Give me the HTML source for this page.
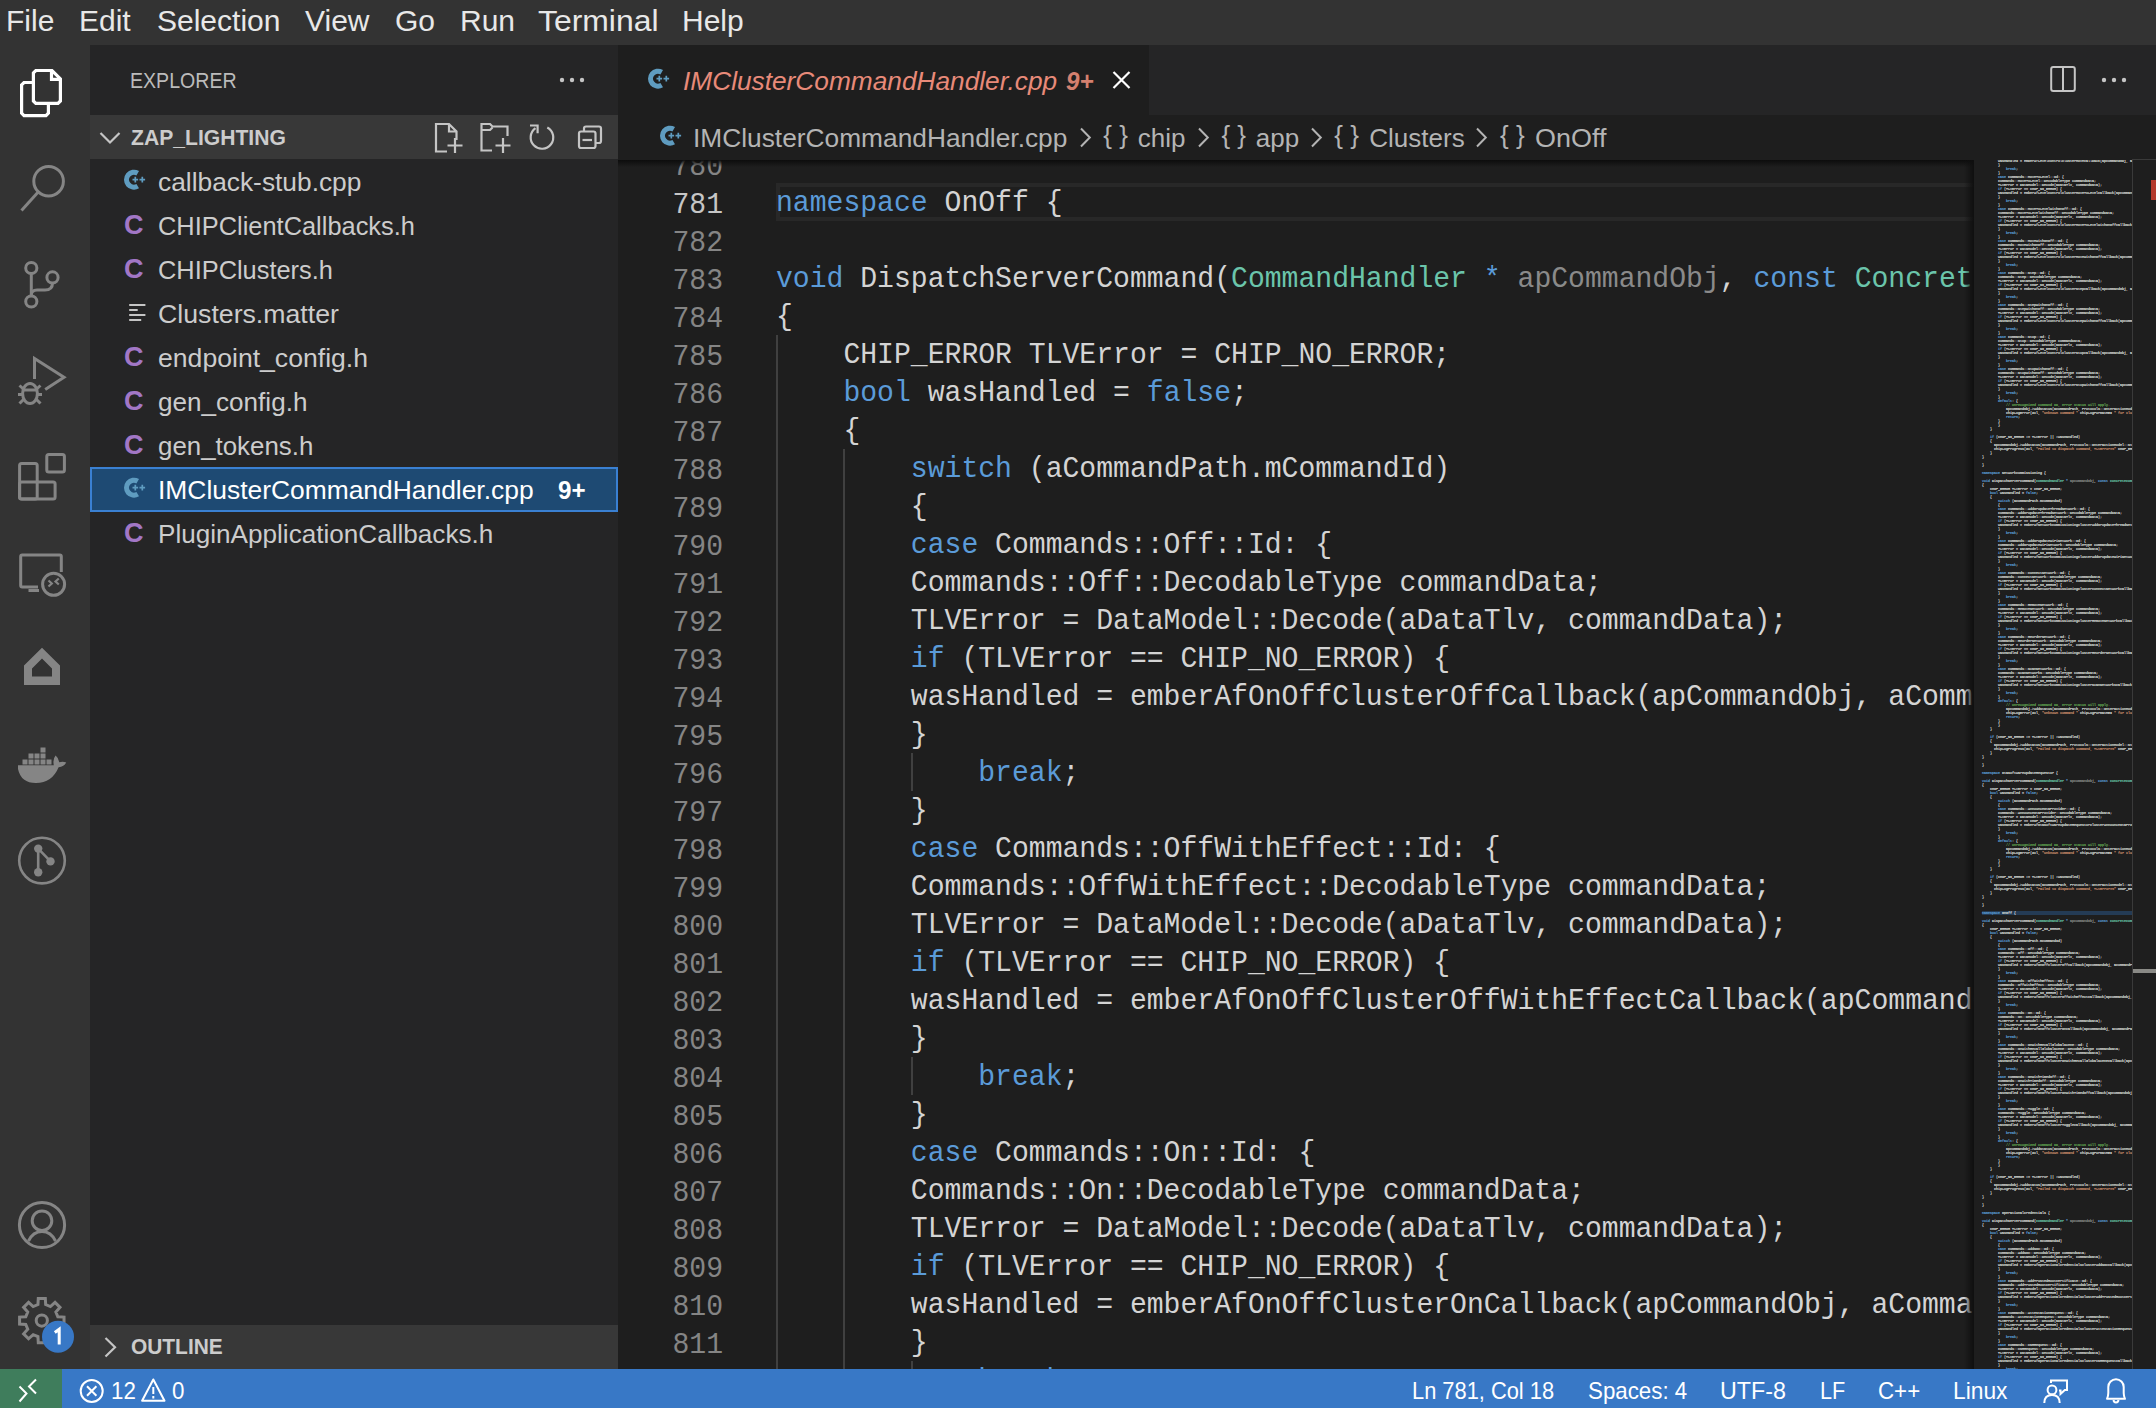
<!DOCTYPE html><html><head><meta charset="utf-8"><style>
*{box-sizing:border-box}
html,body{margin:0;padding:0}
body{width:2156px;height:1408px;overflow:hidden;position:relative;background:#1e1e1e;font-family:"Liberation Sans",sans-serif}
.abs{position:absolute}
#menubar{left:0;top:0;width:2156px;height:45px;background:#333333}
.menu{position:absolute;top:0;height:45px;line-height:43px;font-size:29px;color:#e6e6e6;white-space:pre}
#activity{left:0;top:45px;width:90px;height:1324px;background:#333333}
#sidebar{left:90px;top:45px;width:528px;height:1324px;background:#252526}
#editor{left:618px;top:45px;width:1538px;height:1324px;background:#1e1e1e;overflow:hidden}
#tabbar{left:0;top:0;width:1538px;height:70px;background:#252526}
#tab{left:0;top:0;width:531px;height:70px;background:#1e1e1e}
#status{left:0;top:1369px;width:2156px;height:39px;background:#3878c6}
.st{position:absolute;top:0;height:39px;line-height:41px;font-size:24px;color:#ffffff;white-space:pre}
.side{position:absolute;font-size:26px;color:#cccccc;white-space:pre;line-height:44px;height:44px}
.code{position:absolute;font-family:"Liberation Mono",monospace;white-space:pre;color:#d4d4d4}
.k{color:#5b9bd8}.t{color:#6bc5ab}.f{color:#8a8a8a}.c{color:#62a552}.s{color:#d08d6d}
</style></head><body>
<div id="menubar" class="abs"></div>
<div class="abs" style="left:6px;top:5.80px;font-size:30px;line-height:30px;color:#e8e8e8;font-weight:400;font-style:normal;white-space:pre;">File</div>
<div class="abs" style="left:79px;top:5.80px;font-size:30px;line-height:30px;color:#e8e8e8;font-weight:400;font-style:normal;white-space:pre;">Edit</div>
<div class="abs" style="left:157px;top:5.80px;font-size:30px;line-height:30px;color:#e8e8e8;font-weight:400;font-style:normal;white-space:pre;">Selection</div>
<div class="abs" style="left:305px;top:5.80px;font-size:30px;line-height:30px;color:#e8e8e8;font-weight:400;font-style:normal;white-space:pre;">View</div>
<div class="abs" style="left:395px;top:5.80px;font-size:30px;line-height:30px;color:#e8e8e8;font-weight:400;font-style:normal;white-space:pre;">Go</div>
<div class="abs" style="left:460px;top:5.80px;font-size:30px;line-height:30px;color:#e8e8e8;font-weight:400;font-style:normal;white-space:pre;">Run</div>
<div class="abs" style="left:538px;top:5.80px;font-size:30px;line-height:30px;color:#e8e8e8;font-weight:400;font-style:normal;white-space:pre;transform:scaleX(1.063);transform-origin:0 0;">Terminal</div>
<div class="abs" style="left:682px;top:5.80px;font-size:30px;line-height:30px;color:#e8e8e8;font-weight:400;font-style:normal;white-space:pre;">Help</div>
<div id="activity" class="abs"></div>

<svg class="abs" style="left:0;top:0" width="90" height="1408" viewBox="0 0 90 1408">
<g fill="none" stroke="#ffffff" stroke-width="3.2" stroke-linejoin="miter">
 <path d="M 33.5 82.5 H 24 L 21.6 84.9 V 113.2 L 24 115.6 H 46 L 48.4 113.2 V 104.5"/>
 <path d="M 35.8 70.5 H 52 L 60.4 78.9 V 101 L 58 103.4 H 35.8 L 33.4 101 V 72.9 Z"/>
 <path d="M 51.5 71 V 79.4 H 60"/>
</g>
<g fill="none" stroke="#858585" stroke-width="3">
 <circle cx="48.6" cy="181.2" r="14.8"/>
 <path d="M 38.2 192 L 21.5 210.5"/>
 <circle cx="31.3" cy="268" r="5.6"/>
 <circle cx="52.5" cy="277.4" r="5.6"/>
 <circle cx="31.3" cy="301.5" r="5.6"/>
 <path d="M 31.3 273.6 V 295.9"/>
 <path d="M 52.5 283 Q 52.5 290 45 290 H 37 Q 31.3 290 31.3 295"/>
 <path d="M 34.5 379 V 358.5 L 64 377.3 L 45.2 389.5" stroke-linejoin="miter"/>
 <ellipse cx="30" cy="393.5" rx="7.4" ry="10"/>
 <path d="M 22.6 390 H 37.4"/>
 <path d="M 19.5 385.5 L 24 389.5 M 40.5 385.5 L 36 389.5 M 18 394.5 H 22.5 M 42 394.5 H 37.5 M 19.5 403.5 L 24 399 M 40.5 403.5 L 36 399"/>
 <rect x="46.8" y="454.5" width="17.6" height="17.6" rx="2"/>
 <rect x="19.6" y="463.5" width="17.6" height="35.4" rx="2"/>
 <rect x="19.6" y="482" width="35.5" height="16.9" rx="2"/>
 <path d="M 38 587 H 22.2 Q 20.7 587 20.7 585.5 V 556.4 Q 20.7 554.9 22.2 554.9 H 59.8 Q 61.3 554.9 61.3 556.4 V 572"/>
 <path d="M 28.5 590.5 H 39"/>
 <circle cx="53.6" cy="584.3" r="11"/>
 <path d="M 48.5 580.5 L 51.8 583.5 L 48.5 586.5 M 58.8 578.5 L 55.5 581.5 L 58.8 584.5" stroke-width="2.2"/>
 <circle cx="42" cy="860.6" r="22.8" stroke-width="2.6"/>
 <path d="M 38.2 848.6 V 872.3 M 38.2 848.6 L 50.5 861.4" stroke-width="2.6"/>
 <circle cx="42" cy="1225" r="22.6"/>
 <circle cx="42" cy="1220.7" r="9.8"/>
 <path d="M 28.5 1241 Q 33 1231.5 42 1231.5 Q 51 1231.5 55.5 1241"/>
 <path d="M 37.95 1304.56 L 38.28 1298.38 L 45.32 1298.38 L 45.65 1304.56 L 50.42 1306.53 L 55.03 1302.40 L 60.00 1307.37 L 55.87 1311.98 L 57.84 1316.75 L 64.02 1317.08 L 64.02 1324.12 L 57.84 1324.45 L 55.87 1329.22 L 60.00 1333.83 L 55.03 1338.80 L 50.42 1334.67 L 45.65 1336.64 L 45.32 1342.82 L 38.28 1342.82 L 37.95 1336.64 L 33.18 1334.67 L 28.57 1338.80 L 23.60 1333.83 L 27.73 1329.22 L 25.76 1324.45 L 19.58 1324.12 L 19.58 1317.08 L 25.76 1316.75 L 27.73 1311.98 L 23.60 1307.37 L 28.57 1302.40 L 33.18 1306.53 Z"/>
 <circle cx="41.8" cy="1320.6" r="5.6"/>
</g>
<g fill="#858585">
 <path fill-rule="evenodd" d="M 42 647.8 L 60 665.5 V 685 H 24 V 665.5 Z M 42 658.5 L 32 668.5 V 676.5 H 52 V 668.5 Z"/>
 <circle cx="38.2" cy="848.6" r="4.2"/><circle cx="50.5" cy="861.4" r="4.2"/><circle cx="38.2" cy="872.3" r="4.2"/>
 <path d="M 18 765.3 H 53.8 Q 52.5 759 55.6 755.5 Q 58.8 758 59.3 762.3 Q 63 761 66.2 762.6 Q 64 767 58.6 767.2 Q 52 783 36 783 Q 21 783 18 769 Z"/>
 <rect x="22.5" y="759.5" width="5" height="5"/><rect x="28.5" y="759.5" width="5" height="5"/><rect x="34.5" y="759.5" width="5" height="5"/><rect x="40.5" y="759.5" width="5" height="5"/><rect x="46.5" y="759.5" width="5" height="5"/>
 <rect x="28.5" y="753.5" width="5" height="5"/><rect x="34.5" y="753.5" width="5" height="5"/><rect x="40.5" y="753.5" width="5" height="5"/>
 <rect x="40.5" y="747.5" width="5" height="5"/>
</g>
<circle cx="58" cy="1336.8" r="16" fill="#3878c6"/>
<path d="M 54.8 1332.5 L 59.2 1329.3 V 1344.6" fill="none" stroke="#ffffff" stroke-width="3"/>
</svg>

<div id="sidebar" class="abs"></div>
<div class="abs" style="left:130px;top:70.15px;font-size:22.5px;line-height:22.5px;color:#bbbbbb;font-weight:400;font-style:normal;white-space:pre;transform:scaleX(0.87);transform-origin:0 0;">EXPLORER</div>
<svg class="abs" style="left:550px;top:70px" width="40" height="20"><g fill="#c5c5c5"><circle cx="12" cy="10" r="2.2"/><circle cx="22" cy="10" r="2.2"/><circle cx="32" cy="10" r="2.2"/></g></svg>
<div class="abs" style="left:90px;top:115px;width:528px;height:44px;background:#383838"></div>
<svg class="abs" style="left:90px;top:115px" width="528" height="44" viewBox="90 115 528 44"><g fill="none" stroke="#c5c5c5" stroke-width="2.2"><path d="M 100.5 133 L 110 142.5 L 119.5 133"/><path d="M 447 151.5 H 436 V 124 H 449 L 456.5 131.5 V 140 M 449 124 V 131.5 H 456.5" stroke-linejoin="miter"/><path d="M 455 138 V 153 M 447.5 145.5 H 462.5"/><path d="M 492 150.5 H 481.5 V 124 H 490 L 492.5 126.5 H 507.5 V 136 M 481.5 130 H 490 L 492.5 127.5" stroke-linejoin="miter"/><path d="M 503 138 V 153 M 495.5 145.5 H 510.5"/><path d="M 535.5 128.2 A 11.3 11.3 0 1 0 547.3 127.5"/><path d="M 530 125.5 H 537.6 V 133.2"/><rect x="579" y="131.5" width="16.5" height="16.5" rx="2"/><path d="M 584 131.5 V 128.5 Q 584 126.5 586 126.5 H 599 Q 601 126.5 601 128.5 V 141 Q 601 143 599 143 H 595.5"/><path d="M 582.5 140 H 592"/></g></svg>
<div class="abs" style="left:130.5px;top:126.68px;font-size:22px;line-height:22px;color:#cccccc;font-weight:700;font-style:normal;white-space:pre;transform:scaleX(0.96);transform-origin:0 0;">ZAP_LIGHTING</div>
<div class="abs" style="left:158px;top:169.39px;font-size:26px;line-height:26px;color:#cccccc;font-weight:400;font-style:normal;white-space:pre;transform:scaleX(1.0126);transform-origin:0 0;">callback-stub.cpp</div>
<svg class="abs" style="left:120px;top:166px" width="32" height="32" viewBox="0 0 32 32"><path d="M 17.73 7.25 A 7.45 7.45 0 1 0 17.73 20.15" fill="none" stroke="#5f9cc0" stroke-width="5.1"/><path d="M 12.5 13.6 H 18.1 M 15.3 10.8 V 16.4 M 19.5 13.6 H 25.1 M 22.3 10.8 V 16.4" stroke="#5f9cc0" stroke-width="1.7"/></svg>
<div class="abs" style="left:158px;top:213.39px;font-size:26px;line-height:26px;color:#cccccc;font-weight:400;font-style:normal;white-space:pre;transform:scaleX(0.977);transform-origin:0 0;">CHIPClientCallbacks.h</div>
<div class="abs" style="left:124px;top:211.64px;font-size:27px;line-height:27px;color:#a277c6;font-weight:700;font-style:normal;white-space:pre;">C</div>
<div class="abs" style="left:158px;top:257.39px;font-size:26px;line-height:26px;color:#cccccc;font-weight:400;font-style:normal;white-space:pre;transform:scaleX(0.9763);transform-origin:0 0;">CHIPClusters.h</div>
<div class="abs" style="left:124px;top:255.64px;font-size:27px;line-height:27px;color:#a277c6;font-weight:700;font-style:normal;white-space:pre;">C</div>
<div class="abs" style="left:158px;top:301.39px;font-size:26px;line-height:26px;color:#cccccc;font-weight:400;font-style:normal;white-space:pre;transform:scaleX(1.0263);transform-origin:0 0;">Clusters.matter</div>
<svg class="abs" style="left:120px;top:292px" width="32" height="44" viewBox="0 0 32 44"><g fill="#c5c5c5"><rect x="9.2" y="12" width="16.2" height="2"/><rect x="9.2" y="17" width="8.5" height="2"/><rect x="9.2" y="22" width="16.2" height="2"/><rect x="9.2" y="27" width="12" height="2"/></g></svg>
<div class="abs" style="left:158px;top:345.39px;font-size:26px;line-height:26px;color:#cccccc;font-weight:400;font-style:normal;white-space:pre;transform:scaleX(1.0232);transform-origin:0 0;">endpoint_config.h</div>
<div class="abs" style="left:124px;top:343.64px;font-size:27px;line-height:27px;color:#a277c6;font-weight:700;font-style:normal;white-space:pre;">C</div>
<div class="abs" style="left:158px;top:389.39px;font-size:26px;line-height:26px;color:#cccccc;font-weight:400;font-style:normal;white-space:pre;transform:scaleX(1.0034);transform-origin:0 0;">gen_config.h</div>
<div class="abs" style="left:124px;top:387.64px;font-size:27px;line-height:27px;color:#a277c6;font-weight:700;font-style:normal;white-space:pre;">C</div>
<div class="abs" style="left:158px;top:433.39px;font-size:26px;line-height:26px;color:#cccccc;font-weight:400;font-style:normal;white-space:pre;transform:scaleX(0.9948);transform-origin:0 0;">gen_tokens.h</div>
<div class="abs" style="left:124px;top:431.64px;font-size:27px;line-height:27px;color:#a277c6;font-weight:700;font-style:normal;white-space:pre;">C</div>
<div class="abs" style="left:90px;top:466.5px;width:528px;height:45px;background:#1e4a73;border:2px solid #3a80d2"></div>
<div class="abs" style="left:158px;top:477.39px;font-size:26px;line-height:26px;color:#ffffff;font-weight:400;font-style:normal;white-space:pre;transform:scaleX(1.0153);transform-origin:0 0;">IMClusterCommandHandler.cpp</div>
<svg class="abs" style="left:120px;top:474px" width="32" height="32" viewBox="0 0 32 32"><path d="M 17.73 7.25 A 7.45 7.45 0 1 0 17.73 20.15" fill="none" stroke="#5f9cc0" stroke-width="5.1"/><path d="M 12.5 13.6 H 18.1 M 15.3 10.8 V 16.4 M 19.5 13.6 H 25.1 M 22.3 10.8 V 16.4" stroke="#5f9cc0" stroke-width="1.7"/></svg>
<div class="abs" style="left:158px;top:521.39px;font-size:26px;line-height:26px;color:#cccccc;font-weight:400;font-style:normal;white-space:pre;transform:scaleX(1.0042);transform-origin:0 0;">PluginApplicationCallbacks.h</div>
<div class="abs" style="left:124px;top:519.64px;font-size:27px;line-height:27px;color:#a277c6;font-weight:700;font-style:normal;white-space:pre;">C</div>
<div class="abs" style="left:558px;top:477.39px;font-size:26px;line-height:26px;color:#ffffff;font-weight:700;font-style:normal;white-space:pre;transform:scaleX(0.93);transform-origin:0 0;">9+</div>
<div class="abs" style="left:90px;top:1325px;width:528px;height:44px;background:#383838"></div>
<svg class="abs" style="left:90px;top:1325px" width="40" height="44" viewBox="90 1325 40 44"><path d="M 105.5 1338 L 115 1347.3 L 105.5 1356.5" fill="none" stroke="#c5c5c5" stroke-width="2.2"/></svg>
<div class="abs" style="left:130.5px;top:1336.08px;font-size:22px;line-height:22px;color:#cccccc;font-weight:700;font-style:normal;white-space:pre;transform:scaleX(0.95);transform-origin:0 0;">OUTLINE</div>
<div class="abs" style="left:618px;top:45px;width:1538px;height:70px;background:#252526"></div>
<div class="abs" style="left:618px;top:45px;width:531px;height:70px;background:#1e1e1e"></div>
<svg class="abs" style="left:644px;top:65px" width="32" height="32" viewBox="0 0 32 32"><path d="M 17.73 7.25 A 7.45 7.45 0 1 0 17.73 20.15" fill="none" stroke="#5f9cc0" stroke-width="5.1"/><path d="M 12.5 13.6 H 18.1 M 15.3 10.8 V 16.4 M 19.5 13.6 H 25.1 M 22.3 10.8 V 16.4" stroke="#5f9cc0" stroke-width="1.7"/></svg>
<div class="abs" style="left:683px;top:68.39px;font-size:26px;line-height:26px;color:#e88a79;font-weight:400;font-style:italic;white-space:pre;transform:scaleX(1.01);transform-origin:0 0;">IMClusterCommandHandler.cpp</div>
<div class="abs" style="left:1066px;top:68.39px;font-size:26px;line-height:26px;color:#d4806f;font-weight:700;font-style:italic;white-space:pre;transform:scaleX(0.93);transform-origin:0 0;">9+</div>
<svg class="abs" style="left:1108px;top:66px" width="28" height="28" viewBox="0 0 28 28"><path d="M 5.5 6 L 21.5 22 M 21.5 6 L 5.5 22" stroke="#ffffff" stroke-width="2.2"/></svg>
<svg class="abs" style="left:2040px;top:56px" width="100" height="50" viewBox="2040 56 100 50"><rect x="2051.2" y="67" width="23.6" height="24" rx="2" fill="none" stroke="#c5c5c5" stroke-width="2"/><path d="M 2063 67 V 91" stroke="#c5c5c5" stroke-width="2"/><g fill="#c5c5c5"><circle cx="2104" cy="80" r="2.2"/><circle cx="2114" cy="80" r="2.2"/><circle cx="2124" cy="80" r="2.2"/></g></svg>
<svg class="abs" style="left:656px;top:122px" width="32" height="32" viewBox="0 0 32 32"><path d="M 17.73 7.25 A 7.45 7.45 0 1 0 17.73 20.15" fill="none" stroke="#5f9cc0" stroke-width="5.1"/><path d="M 12.5 13.6 H 18.1 M 15.3 10.8 V 16.4 M 19.5 13.6 H 25.1 M 22.3 10.8 V 16.4" stroke="#5f9cc0" stroke-width="1.7"/></svg>
<div class="abs" style="left:692.5px;top:124.99px;font-size:26px;line-height:26px;color:#b4b4b4;font-weight:400;font-style:normal;white-space:pre;transform:scaleX(1.012);transform-origin:0 0;">IMClusterCommandHandler.cpp</div>
<svg class="abs" style="left:1075.5px;top:124px" width="20" height="30" viewBox="0 0 20 30"><path d="M 5 4.5 L 13.8 13.5 L 5 22.5" fill="none" stroke="#b4b4b4" stroke-width="2"/></svg>
<svg class="abs" style="left:1194px;top:124px" width="20" height="30" viewBox="0 0 20 30"><path d="M 5 4.5 L 13.8 13.5 L 5 22.5" fill="none" stroke="#b4b4b4" stroke-width="2"/></svg>
<svg class="abs" style="left:1306.7px;top:124px" width="20" height="30" viewBox="0 0 20 30"><path d="M 5 4.5 L 13.8 13.5 L 5 22.5" fill="none" stroke="#b4b4b4" stroke-width="2"/></svg>
<svg class="abs" style="left:1472.3px;top:124px" width="20" height="30" viewBox="0 0 20 30"><path d="M 5 4.5 L 13.8 13.5 L 5 22.5" fill="none" stroke="#b4b4b4" stroke-width="2"/></svg>
<div class="abs" style="left:1103.3000000000002px;top:121.99px;font-size:26px;line-height:26px;color:#b4b4b4;font-weight:400;font-style:normal;white-space:pre;">{ }</div>
<div class="abs" style="left:1137.8px;top:124.99px;font-size:26px;line-height:26px;color:#b4b4b4;font-weight:400;font-style:normal;white-space:pre;">chip</div>
<div class="abs" style="left:1221.4px;top:121.99px;font-size:26px;line-height:26px;color:#b4b4b4;font-weight:400;font-style:normal;white-space:pre;">{ }</div>
<div class="abs" style="left:1255.8px;top:124.99px;font-size:26px;line-height:26px;color:#b4b4b4;font-weight:400;font-style:normal;white-space:pre;">app</div>
<div class="abs" style="left:1334.3000000000002px;top:121.99px;font-size:26px;line-height:26px;color:#b4b4b4;font-weight:400;font-style:normal;white-space:pre;">{ }</div>
<div class="abs" style="left:1369.3px;top:124.99px;font-size:26px;line-height:26px;color:#b4b4b4;font-weight:400;font-style:normal;white-space:pre;">Clusters</div>
<div class="abs" style="left:1500.0px;top:121.99px;font-size:26px;line-height:26px;color:#b4b4b4;font-weight:400;font-style:normal;white-space:pre;">{ }</div>
<div class="abs" style="left:1534.7px;top:124.99px;font-size:26px;line-height:26px;color:#b4b4b4;font-weight:400;font-style:normal;white-space:pre;transform:scaleX(1.036);transform-origin:0 0;">OnOff</div>
<div class="abs" style="left:618px;top:160px;width:1356px;height:1209px;overflow:hidden;background:#1e1e1e">
<div class="abs" style="left:158px;top:23px;width:1210px;height:38px;border:4px solid #282828"></div>
<div class="abs" style="left:158.0px;top:175px;width:2px;height:1178px;background:#404040"></div>
<div class="abs" style="left:225.4px;top:289px;width:2px;height:1064px;background:#404040"></div>
<div class="abs" style="left:292.8px;top:593px;width:2px;height:38px;background:#404040"></div>
<div class="abs" style="left:292.8px;top:897px;width:2px;height:38px;background:#404040"></div>
<div class="abs" style="left:292.8px;top:1201px;width:2px;height:38px;background:#404040"></div>
<div class="code" style="left:1px;top:-12px;width:104px;text-align:right;font-size:30px;line-height:38px;color:#858585;transform:scaleX(0.93611);transform-origin:100% 0">780</div>
<div class="code" style="left:158px;top:-14px;font-size:30px;line-height:38px;transform:scaleX(0.93611);transform-origin:0 0"></div>
<div class="code" style="left:1px;top:26px;width:104px;text-align:right;font-size:30px;line-height:38px;color:#c6c6c6;transform:scaleX(0.93611);transform-origin:100% 0">781</div>
<div class="code" style="left:158px;top:24px;font-size:30px;line-height:38px;transform:scaleX(0.93611);transform-origin:0 0"><span class="k">namespace </span>OnOff {</div>
<div class="code" style="left:1px;top:64px;width:104px;text-align:right;font-size:30px;line-height:38px;color:#858585;transform:scaleX(0.93611);transform-origin:100% 0">782</div>
<div class="code" style="left:158px;top:62px;font-size:30px;line-height:38px;transform:scaleX(0.93611);transform-origin:0 0"></div>
<div class="code" style="left:1px;top:102px;width:104px;text-align:right;font-size:30px;line-height:38px;color:#858585;transform:scaleX(0.93611);transform-origin:100% 0">783</div>
<div class="code" style="left:158px;top:100px;font-size:30px;line-height:38px;transform:scaleX(0.93611);transform-origin:0 0"><span class="k">void </span>DispatchServerCommand(<span class="t">CommandHandler </span><span class="k">* </span><span class="f">apCommandObj</span>, <span class="k">const </span><span class="t">ConcreteCommandPath </span>&amp; aCommandPath, TLV::TLVReader &amp; aDataTlv)</div>
<div class="code" style="left:1px;top:140px;width:104px;text-align:right;font-size:30px;line-height:38px;color:#858585;transform:scaleX(0.93611);transform-origin:100% 0">784</div>
<div class="code" style="left:158px;top:138px;font-size:30px;line-height:38px;transform:scaleX(0.93611);transform-origin:0 0">{</div>
<div class="code" style="left:1px;top:178px;width:104px;text-align:right;font-size:30px;line-height:38px;color:#858585;transform:scaleX(0.93611);transform-origin:100% 0">785</div>
<div class="code" style="left:158px;top:176px;font-size:30px;line-height:38px;transform:scaleX(0.93611);transform-origin:0 0">    CHIP_ERROR TLVError = CHIP_NO_ERROR;</div>
<div class="code" style="left:1px;top:216px;width:104px;text-align:right;font-size:30px;line-height:38px;color:#858585;transform:scaleX(0.93611);transform-origin:100% 0">786</div>
<div class="code" style="left:158px;top:214px;font-size:30px;line-height:38px;transform:scaleX(0.93611);transform-origin:0 0">    <span class="k">bool </span>wasHandled = <span class="k">false</span>;</div>
<div class="code" style="left:1px;top:254px;width:104px;text-align:right;font-size:30px;line-height:38px;color:#858585;transform:scaleX(0.93611);transform-origin:100% 0">787</div>
<div class="code" style="left:158px;top:252px;font-size:30px;line-height:38px;transform:scaleX(0.93611);transform-origin:0 0">    {</div>
<div class="code" style="left:1px;top:292px;width:104px;text-align:right;font-size:30px;line-height:38px;color:#858585;transform:scaleX(0.93611);transform-origin:100% 0">788</div>
<div class="code" style="left:158px;top:290px;font-size:30px;line-height:38px;transform:scaleX(0.93611);transform-origin:0 0">        <span class="k">switch </span>(aCommandPath.mCommandId)</div>
<div class="code" style="left:1px;top:330px;width:104px;text-align:right;font-size:30px;line-height:38px;color:#858585;transform:scaleX(0.93611);transform-origin:100% 0">789</div>
<div class="code" style="left:158px;top:328px;font-size:30px;line-height:38px;transform:scaleX(0.93611);transform-origin:0 0">        {</div>
<div class="code" style="left:1px;top:368px;width:104px;text-align:right;font-size:30px;line-height:38px;color:#858585;transform:scaleX(0.93611);transform-origin:100% 0">790</div>
<div class="code" style="left:158px;top:366px;font-size:30px;line-height:38px;transform:scaleX(0.93611);transform-origin:0 0">        <span class="k">case </span>Commands::Off::Id: {</div>
<div class="code" style="left:1px;top:406px;width:104px;text-align:right;font-size:30px;line-height:38px;color:#858585;transform:scaleX(0.93611);transform-origin:100% 0">791</div>
<div class="code" style="left:158px;top:404px;font-size:30px;line-height:38px;transform:scaleX(0.93611);transform-origin:0 0">        Commands::Off::DecodableType commandData;</div>
<div class="code" style="left:1px;top:444px;width:104px;text-align:right;font-size:30px;line-height:38px;color:#858585;transform:scaleX(0.93611);transform-origin:100% 0">792</div>
<div class="code" style="left:158px;top:442px;font-size:30px;line-height:38px;transform:scaleX(0.93611);transform-origin:0 0">        TLVError = DataModel::Decode(aDataTlv, commandData);</div>
<div class="code" style="left:1px;top:482px;width:104px;text-align:right;font-size:30px;line-height:38px;color:#858585;transform:scaleX(0.93611);transform-origin:100% 0">793</div>
<div class="code" style="left:158px;top:480px;font-size:30px;line-height:38px;transform:scaleX(0.93611);transform-origin:0 0">        <span class="k">if </span>(TLVError == CHIP_NO_ERROR) {</div>
<div class="code" style="left:1px;top:520px;width:104px;text-align:right;font-size:30px;line-height:38px;color:#858585;transform:scaleX(0.93611);transform-origin:100% 0">794</div>
<div class="code" style="left:158px;top:518px;font-size:30px;line-height:38px;transform:scaleX(0.93611);transform-origin:0 0">        wasHandled = emberAfOnOffClusterOffCallback(apCommandObj, aCommandPath, commandData);</div>
<div class="code" style="left:1px;top:558px;width:104px;text-align:right;font-size:30px;line-height:38px;color:#858585;transform:scaleX(0.93611);transform-origin:100% 0">795</div>
<div class="code" style="left:158px;top:556px;font-size:30px;line-height:38px;transform:scaleX(0.93611);transform-origin:0 0">        }</div>
<div class="code" style="left:1px;top:596px;width:104px;text-align:right;font-size:30px;line-height:38px;color:#858585;transform:scaleX(0.93611);transform-origin:100% 0">796</div>
<div class="code" style="left:158px;top:594px;font-size:30px;line-height:38px;transform:scaleX(0.93611);transform-origin:0 0">            <span class="k">break</span>;</div>
<div class="code" style="left:1px;top:634px;width:104px;text-align:right;font-size:30px;line-height:38px;color:#858585;transform:scaleX(0.93611);transform-origin:100% 0">797</div>
<div class="code" style="left:158px;top:632px;font-size:30px;line-height:38px;transform:scaleX(0.93611);transform-origin:0 0">        }</div>
<div class="code" style="left:1px;top:672px;width:104px;text-align:right;font-size:30px;line-height:38px;color:#858585;transform:scaleX(0.93611);transform-origin:100% 0">798</div>
<div class="code" style="left:158px;top:670px;font-size:30px;line-height:38px;transform:scaleX(0.93611);transform-origin:0 0">        <span class="k">case </span>Commands::OffWithEffect::Id: {</div>
<div class="code" style="left:1px;top:710px;width:104px;text-align:right;font-size:30px;line-height:38px;color:#858585;transform:scaleX(0.93611);transform-origin:100% 0">799</div>
<div class="code" style="left:158px;top:708px;font-size:30px;line-height:38px;transform:scaleX(0.93611);transform-origin:0 0">        Commands::OffWithEffect::DecodableType commandData;</div>
<div class="code" style="left:1px;top:748px;width:104px;text-align:right;font-size:30px;line-height:38px;color:#858585;transform:scaleX(0.93611);transform-origin:100% 0">800</div>
<div class="code" style="left:158px;top:746px;font-size:30px;line-height:38px;transform:scaleX(0.93611);transform-origin:0 0">        TLVError = DataModel::Decode(aDataTlv, commandData);</div>
<div class="code" style="left:1px;top:786px;width:104px;text-align:right;font-size:30px;line-height:38px;color:#858585;transform:scaleX(0.93611);transform-origin:100% 0">801</div>
<div class="code" style="left:158px;top:784px;font-size:30px;line-height:38px;transform:scaleX(0.93611);transform-origin:0 0">        <span class="k">if </span>(TLVError == CHIP_NO_ERROR) {</div>
<div class="code" style="left:1px;top:824px;width:104px;text-align:right;font-size:30px;line-height:38px;color:#858585;transform:scaleX(0.93611);transform-origin:100% 0">802</div>
<div class="code" style="left:158px;top:822px;font-size:30px;line-height:38px;transform:scaleX(0.93611);transform-origin:0 0">        wasHandled = emberAfOnOffClusterOffWithEffectCallback(apCommandObj, aCommandPath, commandData);</div>
<div class="code" style="left:1px;top:862px;width:104px;text-align:right;font-size:30px;line-height:38px;color:#858585;transform:scaleX(0.93611);transform-origin:100% 0">803</div>
<div class="code" style="left:158px;top:860px;font-size:30px;line-height:38px;transform:scaleX(0.93611);transform-origin:0 0">        }</div>
<div class="code" style="left:1px;top:900px;width:104px;text-align:right;font-size:30px;line-height:38px;color:#858585;transform:scaleX(0.93611);transform-origin:100% 0">804</div>
<div class="code" style="left:158px;top:898px;font-size:30px;line-height:38px;transform:scaleX(0.93611);transform-origin:0 0">            <span class="k">break</span>;</div>
<div class="code" style="left:1px;top:938px;width:104px;text-align:right;font-size:30px;line-height:38px;color:#858585;transform:scaleX(0.93611);transform-origin:100% 0">805</div>
<div class="code" style="left:158px;top:936px;font-size:30px;line-height:38px;transform:scaleX(0.93611);transform-origin:0 0">        }</div>
<div class="code" style="left:1px;top:976px;width:104px;text-align:right;font-size:30px;line-height:38px;color:#858585;transform:scaleX(0.93611);transform-origin:100% 0">806</div>
<div class="code" style="left:158px;top:974px;font-size:30px;line-height:38px;transform:scaleX(0.93611);transform-origin:0 0">        <span class="k">case </span>Commands::On::Id: {</div>
<div class="code" style="left:1px;top:1014px;width:104px;text-align:right;font-size:30px;line-height:38px;color:#858585;transform:scaleX(0.93611);transform-origin:100% 0">807</div>
<div class="code" style="left:158px;top:1012px;font-size:30px;line-height:38px;transform:scaleX(0.93611);transform-origin:0 0">        Commands::On::DecodableType commandData;</div>
<div class="code" style="left:1px;top:1052px;width:104px;text-align:right;font-size:30px;line-height:38px;color:#858585;transform:scaleX(0.93611);transform-origin:100% 0">808</div>
<div class="code" style="left:158px;top:1050px;font-size:30px;line-height:38px;transform:scaleX(0.93611);transform-origin:0 0">        TLVError = DataModel::Decode(aDataTlv, commandData);</div>
<div class="code" style="left:1px;top:1090px;width:104px;text-align:right;font-size:30px;line-height:38px;color:#858585;transform:scaleX(0.93611);transform-origin:100% 0">809</div>
<div class="code" style="left:158px;top:1088px;font-size:30px;line-height:38px;transform:scaleX(0.93611);transform-origin:0 0">        <span class="k">if </span>(TLVError == CHIP_NO_ERROR) {</div>
<div class="code" style="left:1px;top:1128px;width:104px;text-align:right;font-size:30px;line-height:38px;color:#858585;transform:scaleX(0.93611);transform-origin:100% 0">810</div>
<div class="code" style="left:158px;top:1126px;font-size:30px;line-height:38px;transform:scaleX(0.93611);transform-origin:0 0">        wasHandled = emberAfOnOffClusterOnCallback(apCommandObj, aCommandPath, commandData);</div>
<div class="code" style="left:1px;top:1166px;width:104px;text-align:right;font-size:30px;line-height:38px;color:#858585;transform:scaleX(0.93611);transform-origin:100% 0">811</div>
<div class="code" style="left:158px;top:1164px;font-size:30px;line-height:38px;transform:scaleX(0.93611);transform-origin:0 0">        }</div>
<div class="code" style="left:1px;top:1204px;width:104px;text-align:right;font-size:30px;line-height:38px;color:#858585;transform:scaleX(0.93611);transform-origin:100% 0">812</div>
<div class="code" style="left:158px;top:1202px;font-size:30px;line-height:38px;transform:scaleX(0.93611);transform-origin:0 0">            <span class="k">break</span>;</div>
</div>
<div class="abs" style="left:618px;top:160px;width:1356px;height:7px;background:linear-gradient(#0c0c0c,rgba(30,30,30,0))"></div>
<div class="abs" style="left:1964px;top:160px;width:10px;height:1209px;background:linear-gradient(90deg,rgba(30,30,30,0),#0f0f0f)"></div>
<div class="abs" style="left:1974px;top:160px;width:159px;height:1209px;overflow:hidden;background:#1e1e1e">
<div class="abs" style="left:8px;top:751px;width:160px;height:4px;background:#243b55"></div>
<div class="abs mmtext" style="left:8px;top:0;transform:scale(0.33333);transform-origin:0 0">
<div style="font-family:'Liberation Mono';font-size:13px;line-height:12px;white-space:pre;color:#dcdcdc;font-weight:700;-webkit-text-stroke:0.3px currentColor;transform:scaleX(0.7692);transform-origin:0 0;margin-top:-3.00px">        wasHandled = emberAfLevelControlClusterMoveCallback(apCommandObj, aCommandPath, commandData);
        }
            <span class="k">break</span>;
        }
        <span class="k">case </span>Commands::MoveToLevel::Id: {
        Commands::MoveToLevel::DecodableType commandData;
        TLVError = DataModel::Decode(aDataTlv, commandData);
        <span class="k">if </span>(TLVError == CHIP_NO_ERROR) {
        wasHandled = emberAfLevelControlClusterMoveToLevelCallback(apCommandObj, aCommandPath, commandData);
        }
            <span class="k">break</span>;
        }
        <span class="k">case </span>Commands::MoveToLevelWithOnOff::Id: {
        Commands::MoveToLevelWithOnOff::DecodableType commandData;
        TLVError = DataModel::Decode(aDataTlv, commandData);
        <span class="k">if </span>(TLVError == CHIP_NO_ERROR) {
        wasHandled = emberAfLevelControlClusterMoveToLevelWithOnOffCallback(apCommandObj, aCommandPath, commandData);
        }
            <span class="k">break</span>;
        }
        <span class="k">case </span>Commands::MoveWithOnOff::Id: {
        Commands::MoveWithOnOff::DecodableType commandData;
        TLVError = DataModel::Decode(aDataTlv, commandData);
        <span class="k">if </span>(TLVError == CHIP_NO_ERROR) {
        wasHandled = emberAfLevelControlClusterMoveWithOnOffCallback(apCommandObj, aCommandPath, commandData);
        }
            <span class="k">break</span>;
        }
        <span class="k">case </span>Commands::Step::Id: {
        Commands::Step::DecodableType commandData;
        TLVError = DataModel::Decode(aDataTlv, commandData);
        <span class="k">if </span>(TLVError == CHIP_NO_ERROR) {
        wasHandled = emberAfLevelControlClusterStepCallback(apCommandObj, aCommandPath, commandData);
        }
            <span class="k">break</span>;
        }
        <span class="k">case </span>Commands::StepWithOnOff::Id: {
        Commands::StepWithOnOff::DecodableType commandData;
        TLVError = DataModel::Decode(aDataTlv, commandData);
        <span class="k">if </span>(TLVError == CHIP_NO_ERROR) {
        wasHandled = emberAfLevelControlClusterStepWithOnOffCallback(apCommandObj, aCommandPath, commandData);
        }
            <span class="k">break</span>;
        }
        <span class="k">case </span>Commands::Stop::Id: {
        Commands::Stop::DecodableType commandData;
        TLVError = DataModel::Decode(aDataTlv, commandData);
        <span class="k">if </span>(TLVError == CHIP_NO_ERROR) {
        wasHandled = emberAfLevelControlClusterStopCallback(apCommandObj, aCommandPath, commandData);
        }
            <span class="k">break</span>;
        }
        <span class="k">case </span>Commands::StopWithOnOff::Id: {
        Commands::StopWithOnOff::DecodableType commandData;
        TLVError = DataModel::Decode(aDataTlv, commandData);
        <span class="k">if </span>(TLVError == CHIP_NO_ERROR) {
        wasHandled = emberAfLevelControlClusterStopWithOnOffCallback(apCommandObj, aCommandPath, commandData);
        }
            <span class="k">break</span>;
        }
        <span class="k">default</span>: {
            <span class="c">// Unrecognized command ID, error status will apply.</span>
            apCommandObj-&gt;AddStatus(aCommandPath, Protocols::InteractionModel::Status::UnsupportedCommand);
            ChipLogError(Zcl, <span class="s">&quot;Unknown command &quot; </span>ChipLogFormatMEI <span class="s">&quot; for cluster &quot; </span>ChipLogFormatMEI, ChipLogValueMEI(aCommandPath.mCommandId));
            <span class="k">return</span>;
        }
        }
    }

    <span class="k">if </span>(CHIP_NO_ERROR != TLVError || !wasHandled)
    {
      apCommandObj-&gt;AddStatus(aCommandPath, Protocols::InteractionModel::Status::InvalidCommand);
      ChipLogProgress(Zcl, <span class="s">&quot;Failed to dispatch command, TLVError=%&quot; </span>CHIP_ERROR_FORMAT, TLVError.Format());
    }
}

}

<span class="k">namespace </span>NetworkCommissioning {

<span class="k">void </span>DispatchServerCommand(<span class="t">CommandHandler </span><span class="k">* </span><span class="f">apCommandObj</span>, <span class="k">const </span><span class="t">ConcreteCommandPath </span>&amp; aCommandPath, TLV::TLVReader &amp; aDataTlv)
{
    CHIP_ERROR TLVError = CHIP_NO_ERROR;
    <span class="k">bool </span>wasHandled = <span class="k">false</span>;
    {
        <span class="k">switch </span>(aCommandPath.mCommandId)
        {
        <span class="k">case </span>Commands::AddOrUpdateThreadNetwork::Id: {
        Commands::AddOrUpdateThreadNetwork::DecodableType commandData;
        TLVError = DataModel::Decode(aDataTlv, commandData);
        <span class="k">if </span>(TLVError == CHIP_NO_ERROR) {
        wasHandled = emberAfNetworkCommissioningClusterAddOrUpdateThreadNetworkCallback(apCommandObj, aCommandPath, commandData);
        }
            <span class="k">break</span>;
        }
        <span class="k">case </span>Commands::AddOrUpdateWiFiNetwork::Id: {
        Commands::AddOrUpdateWiFiNetwork::DecodableType commandData;
        TLVError = DataModel::Decode(aDataTlv, commandData);
        <span class="k">if </span>(TLVError == CHIP_NO_ERROR) {
        wasHandled = emberAfNetworkCommissioningClusterAddOrUpdateWiFiNetworkCallback(apCommandObj, aCommandPath, commandData);
        }
            <span class="k">break</span>;
        }
        <span class="k">case </span>Commands::ConnectNetwork::Id: {
        Commands::ConnectNetwork::DecodableType commandData;
        TLVError = DataModel::Decode(aDataTlv, commandData);
        <span class="k">if </span>(TLVError == CHIP_NO_ERROR) {
        wasHandled = emberAfNetworkCommissioningClusterConnectNetworkCallback(apCommandObj, aCommandPath, commandData);
        }
            <span class="k">break</span>;
        }
        <span class="k">case </span>Commands::RemoveNetwork::Id: {
        Commands::RemoveNetwork::DecodableType commandData;
        TLVError = DataModel::Decode(aDataTlv, commandData);
        <span class="k">if </span>(TLVError == CHIP_NO_ERROR) {
        wasHandled = emberAfNetworkCommissioningClusterRemoveNetworkCallback(apCommandObj, aCommandPath, commandData);
        }
            <span class="k">break</span>;
        }
        <span class="k">case </span>Commands::ReorderNetwork::Id: {
        Commands::ReorderNetwork::DecodableType commandData;
        TLVError = DataModel::Decode(aDataTlv, commandData);
        <span class="k">if </span>(TLVError == CHIP_NO_ERROR) {
        wasHandled = emberAfNetworkCommissioningClusterReorderNetworkCallback(apCommandObj, aCommandPath, commandData);
        }
            <span class="k">break</span>;
        }
        <span class="k">case </span>Commands::ScanNetworks::Id: {
        Commands::ScanNetworks::DecodableType commandData;
        TLVError = DataModel::Decode(aDataTlv, commandData);
        <span class="k">if </span>(TLVError == CHIP_NO_ERROR) {
        wasHandled = emberAfNetworkCommissioningClusterScanNetworksCallback(apCommandObj, aCommandPath, commandData);
        }
            <span class="k">break</span>;
        }
        <span class="k">default</span>: {
            <span class="c">// Unrecognized command ID, error status will apply.</span>
            apCommandObj-&gt;AddStatus(aCommandPath, Protocols::InteractionModel::Status::UnsupportedCommand);
            ChipLogError(Zcl, <span class="s">&quot;Unknown command &quot; </span>ChipLogFormatMEI <span class="s">&quot; for cluster &quot; </span>ChipLogFormatMEI, ChipLogValueMEI(aCommandPath.mCommandId));
            <span class="k">return</span>;
        }
        }
    }

    <span class="k">if </span>(CHIP_NO_ERROR != TLVError || !wasHandled)
    {
      apCommandObj-&gt;AddStatus(aCommandPath, Protocols::InteractionModel::Status::InvalidCommand);
      ChipLogProgress(Zcl, <span class="s">&quot;Failed to dispatch command, TLVError=%&quot; </span>CHIP_ERROR_FORMAT, TLVError.Format());
    }
}

}

<span class="k">namespace </span>OtaSoftwareUpdateRequestor {

<span class="k">void </span>DispatchServerCommand(<span class="t">CommandHandler </span><span class="k">* </span><span class="f">apCommandObj</span>, <span class="k">const </span><span class="t">ConcreteCommandPath </span>&amp; aCommandPath, TLV::TLVReader &amp; aDataTlv)
{
    CHIP_ERROR TLVError = CHIP_NO_ERROR;
    <span class="k">bool </span>wasHandled = <span class="k">false</span>;
    {
        <span class="k">switch </span>(aCommandPath.mCommandId)
        {
        <span class="k">case </span>Commands::AnnounceOtaProvider::Id: {
        Commands::AnnounceOtaProvider::DecodableType commandData;
        TLVError = DataModel::Decode(aDataTlv, commandData);
        <span class="k">if </span>(TLVError == CHIP_NO_ERROR) {
        wasHandled = emberAfOtaSoftwareUpdateRequestorClusterAnnounceOtaProviderCallback(apCommandObj, aCommandPath, commandData);
        }
            <span class="k">break</span>;
        }
        <span class="k">default</span>: {
            <span class="c">// Unrecognized command ID, error status will apply.</span>
            apCommandObj-&gt;AddStatus(aCommandPath, Protocols::InteractionModel::Status::UnsupportedCommand);
            ChipLogError(Zcl, <span class="s">&quot;Unknown command &quot; </span>ChipLogFormatMEI <span class="s">&quot; for cluster &quot; </span>ChipLogFormatMEI, ChipLogValueMEI(aCommandPath.mCommandId));
            <span class="k">return</span>;
        }
        }
    }

    <span class="k">if </span>(CHIP_NO_ERROR != TLVError || !wasHandled)
    {
      apCommandObj-&gt;AddStatus(aCommandPath, Protocols::InteractionModel::Status::InvalidCommand);
      ChipLogProgress(Zcl, <span class="s">&quot;Failed to dispatch command, TLVError=%&quot; </span>CHIP_ERROR_FORMAT, TLVError.Format());
    }
}

}

<span class="k">namespace </span>OnOff {

<span class="k">void </span>DispatchServerCommand(<span class="t">CommandHandler </span><span class="k">* </span><span class="f">apCommandObj</span>, <span class="k">const </span><span class="t">ConcreteCommandPath </span>&amp; aCommandPath, TLV::TLVReader &amp; aDataTlv)
{
    CHIP_ERROR TLVError = CHIP_NO_ERROR;
    <span class="k">bool </span>wasHandled = <span class="k">false</span>;
    {
        <span class="k">switch </span>(aCommandPath.mCommandId)
        {
        <span class="k">case </span>Commands::Off::Id: {
        Commands::Off::DecodableType commandData;
        TLVError = DataModel::Decode(aDataTlv, commandData);
        <span class="k">if </span>(TLVError == CHIP_NO_ERROR) {
        wasHandled = emberAfOnOffClusterOffCallback(apCommandObj, aCommandPath, commandData);
        }
            <span class="k">break</span>;
        }
        <span class="k">case </span>Commands::OffWithEffect::Id: {
        Commands::OffWithEffect::DecodableType commandData;
        TLVError = DataModel::Decode(aDataTlv, commandData);
        <span class="k">if </span>(TLVError == CHIP_NO_ERROR) {
        wasHandled = emberAfOnOffClusterOffWithEffectCallback(apCommandObj, aCommandPath, commandData);
        }
            <span class="k">break</span>;
        }
        <span class="k">case </span>Commands::On::Id: {
        Commands::On::DecodableType commandData;
        TLVError = DataModel::Decode(aDataTlv, commandData);
        <span class="k">if </span>(TLVError == CHIP_NO_ERROR) {
        wasHandled = emberAfOnOffClusterOnCallback(apCommandObj, aCommandPath, commandData);
        }
            <span class="k">break</span>;
        }
        <span class="k">case </span>Commands::OnWithRecallGlobalScene::Id: {
        Commands::OnWithRecallGlobalScene::DecodableType commandData;
        TLVError = DataModel::Decode(aDataTlv, commandData);
        <span class="k">if </span>(TLVError == CHIP_NO_ERROR) {
        wasHandled = emberAfOnOffClusterOnWithRecallGlobalSceneCallback(apCommandObj, aCommandPath, commandData);
        }
            <span class="k">break</span>;
        }
        <span class="k">case </span>Commands::OnWithTimedOff::Id: {
        Commands::OnWithTimedOff::DecodableType commandData;
        TLVError = DataModel::Decode(aDataTlv, commandData);
        <span class="k">if </span>(TLVError == CHIP_NO_ERROR) {
        wasHandled = emberAfOnOffClusterOnWithTimedOffCallback(apCommandObj, aCommandPath, commandData);
        }
            <span class="k">break</span>;
        }
        <span class="k">case </span>Commands::Toggle::Id: {
        Commands::Toggle::DecodableType commandData;
        TLVError = DataModel::Decode(aDataTlv, commandData);
        <span class="k">if </span>(TLVError == CHIP_NO_ERROR) {
        wasHandled = emberAfOnOffClusterToggleCallback(apCommandObj, aCommandPath, commandData);
        }
            <span class="k">break</span>;
        }
        <span class="k">default</span>: {
            <span class="c">// Unrecognized command ID, error status will apply.</span>
            apCommandObj-&gt;AddStatus(aCommandPath, Protocols::InteractionModel::Status::UnsupportedCommand);
            ChipLogError(Zcl, <span class="s">&quot;Unknown command &quot; </span>ChipLogFormatMEI <span class="s">&quot; for cluster &quot; </span>ChipLogFormatMEI, ChipLogValueMEI(aCommandPath.mCommandId));
            <span class="k">return</span>;
        }
        }
    }

    <span class="k">if </span>(CHIP_NO_ERROR != TLVError || !wasHandled)
    {
      apCommandObj-&gt;AddStatus(aCommandPath, Protocols::InteractionModel::Status::InvalidCommand);
      ChipLogProgress(Zcl, <span class="s">&quot;Failed to dispatch command, TLVError=%&quot; </span>CHIP_ERROR_FORMAT, TLVError.Format());
    }
}

}

<span class="k">namespace </span>OperationalCredentials {

<span class="k">void </span>DispatchServerCommand(<span class="t">CommandHandler </span><span class="k">* </span><span class="f">apCommandObj</span>, <span class="k">const </span><span class="t">ConcreteCommandPath </span>&amp; aCommandPath, TLV::TLVReader &amp; aDataTlv)
{
    CHIP_ERROR TLVError = CHIP_NO_ERROR;
    <span class="k">bool </span>wasHandled = <span class="k">false</span>;
    {
        <span class="k">switch </span>(aCommandPath.mCommandId)
        {
        <span class="k">case </span>Commands::AddNOC::Id: {
        Commands::AddNOC::DecodableType commandData;
        TLVError = DataModel::Decode(aDataTlv, commandData);
        <span class="k">if </span>(TLVError == CHIP_NO_ERROR) {
        wasHandled = emberAfOperationalCredentialsClusterAddNOCCallback(apCommandObj, aCommandPath, commandData);
        }
            <span class="k">break</span>;
        }
        <span class="k">case </span>Commands::AddTrustedRootCertificate::Id: {
        Commands::AddTrustedRootCertificate::DecodableType commandData;
        TLVError = DataModel::Decode(aDataTlv, commandData);
        <span class="k">if </span>(TLVError == CHIP_NO_ERROR) {
        wasHandled = emberAfOperationalCredentialsClusterAddTrustedRootCertificateCallback(apCommandObj, aCommandPath, commandData);
        }
            <span class="k">break</span>;
        }
        <span class="k">case </span>Commands::AttestationRequest::Id: {
        Commands::AttestationRequest::DecodableType commandData;
        TLVError = DataModel::Decode(aDataTlv, commandData);
        <span class="k">if </span>(TLVError == CHIP_NO_ERROR) {
        wasHandled = emberAfOperationalCredentialsClusterAttestationRequestCallback(apCommandObj, aCommandPath, commandData);
        }
            <span class="k">break</span>;
        }
        <span class="k">case </span>Commands::CSRRequest::Id: {
        Commands::CSRRequest::DecodableType commandData;
        TLVError = DataModel::Decode(aDataTlv, commandData);
        <span class="k">if </span>(TLVError == CHIP_NO_ERROR) {
        wasHandled = emberAfOperationalCredentialsClusterCSRRequestCallback(apCommandObj, aCommandPath, commandData);
        }
            <span class="k">break</span>;
        }
        <span class="k">case </span>Commands::CertificateChainRequest::Id: {
        Commands::CertificateChainRequest::DecodableType commandData;
        TLVError = DataModel::Decode(aDataTlv, commandData);</div>
</div></div>
<div class="abs" style="left:2132px;top:160px;width:1px;height:1209px;background:#3a3a3a"></div>
<div class="abs" style="left:2132px;top:159px;width:24px;height:1px;background:#3a3a3a"></div>
<div class="abs" style="left:2151px;top:180px;width:5px;height:20px;background:#b33a2d"></div>
<div class="abs" style="left:2133px;top:969px;width:23px;height:4px;background:#8a8a86"></div>
<div id="status" class="abs"></div>
<div class="abs" style="left:0;top:1369px;width:62px;height:39px;background:#3f7d5c"></div>
<svg class="abs" style="left:0;top:1369px" width="200" height="39" viewBox="0 1369 200 39"><g fill="none" stroke="#ffffff" stroke-width="2"><path d="M 19.5 1386.5 L 26.5 1393.5 L 19.5 1401.5 M 36 1379.5 L 29 1386.5 L 36 1393.5"/><circle cx="91.7" cy="1391" r="11"/><path d="M 87 1386.3 L 96.4 1395.7 M 96.4 1386.3 L 87 1395.7"/><path d="M 153.3 1379.5 L 164.5 1400.8 H 142.1 Z" stroke-linejoin="round"/><path d="M 153.3 1387 V 1394 M 153.3 1396 V 1398.5"/></g></svg>
<div class="abs" style="left:110.5px;top:1378.68px;font-size:24px;line-height:24px;color:#ffffff;font-weight:400;font-style:normal;white-space:pre;transform:scaleX(0.93);transform-origin:0 0;">12</div>
<div class="abs" style="left:172px;top:1378.68px;font-size:24px;line-height:24px;color:#ffffff;font-weight:400;font-style:normal;white-space:pre;transform:scaleX(0.93);transform-origin:0 0;">0</div>
<div class="abs" style="left:1412px;top:1378.68px;font-size:24px;line-height:24px;color:#ffffff;font-weight:400;font-style:normal;white-space:pre;transform:scaleX(0.91);transform-origin:0 0;">Ln 781, Col 18</div>
<div class="abs" style="left:1588px;top:1378.68px;font-size:24px;line-height:24px;color:#ffffff;font-weight:400;font-style:normal;white-space:pre;transform:scaleX(0.93);transform-origin:0 0;">Spaces: 4</div>
<div class="abs" style="left:1720px;top:1378.68px;font-size:24px;line-height:24px;color:#ffffff;font-weight:400;font-style:normal;white-space:pre;transform:scaleX(0.97);transform-origin:0 0;">UTF-8</div>
<div class="abs" style="left:1820px;top:1378.68px;font-size:24px;line-height:24px;color:#ffffff;font-weight:400;font-style:normal;white-space:pre;transform:scaleX(0.9);transform-origin:0 0;">LF</div>
<div class="abs" style="left:1877.5px;top:1378.68px;font-size:24px;line-height:24px;color:#ffffff;font-weight:400;font-style:normal;white-space:pre;transform:scaleX(0.93);transform-origin:0 0;">C++</div>
<div class="abs" style="left:1952.5px;top:1378.68px;font-size:24px;line-height:24px;color:#ffffff;font-weight:400;font-style:normal;white-space:pre;transform:scaleX(0.95);transform-origin:0 0;">Linux</div>
<svg class="abs" style="left:2030px;top:1369px" width="126" height="39" viewBox="2030 1369 126 39"><g fill="none" stroke="#ffffff" stroke-width="2"><circle cx="2052" cy="1389.9" r="4.4"/><path d="M 2044.3 1403 Q 2044.3 1395 2052 1395 Q 2059.7 1395 2059.7 1403"/><path d="M 2051 1383 V 1380.4 H 2067 V 1390 H 2064.8 L 2060.5 1394 V 1390.5 H 2059" stroke-linejoin="miter"/><path d="M 2107 1398.8 Q 2108.3 1396 2108.3 1393 V 1387 A 7.7 7.7 0 0 1 2123.7 1387 V 1393 Q 2123.7 1396 2125 1398.8 Z" stroke-linejoin="round"/><path d="M 2113.6 1400 A 2.4 2.4 0 0 0 2118.4 1400"/></g></svg>
</body></html>
